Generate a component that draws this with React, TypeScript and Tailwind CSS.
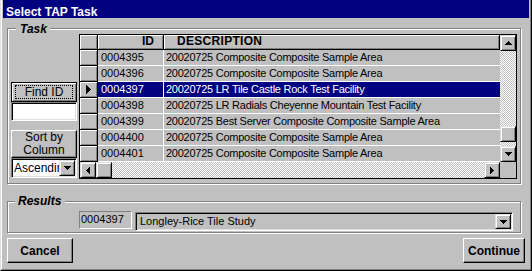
import React from "react";

type Dir = "up" | "down" | "left" | "right" | "sel";

function Glyph({ dir }: { dir: Dir }) {
  const rects: Record<Dir, [number, number, number, number][]> = {
    down: [[0, 0, 7, 1], [1, 1, 5, 1], [2, 2, 3, 1], [3, 3, 1, 1]],
    up: [[3, 0, 1, 1], [2, 1, 3, 1], [1, 2, 5, 1], [0, 3, 7, 1]],
    left: [[3, 0, 1, 7], [2, 1, 1, 5], [1, 2, 1, 3], [0, 3, 1, 1]],
    right: [[0, 0, 1, 7], [1, 1, 1, 5], [2, 2, 1, 3], [3, 3, 1, 1]],
    sel: [[0, 0, 1, 9], [1, 1, 1, 7], [2, 2, 1, 5], [3, 3, 1, 3], [4, 4, 1, 1]],
  };
  const w = dir === "up" || dir === "down" ? 7 : dir === "sel" ? 5 : 4;
  const h = dir === "up" || dir === "down" ? 4 : dir === "sel" ? 9 : 7;
  return (
    <svg width={w} height={h} viewBox={`0 0 ${w} ${h}`} shapeRendering="crispEdges" className="block">
      {rects[dir].map((r, i) => (
        <rect key={i} x={r[0]} y={r[1]} width={r[2]} height={r[3]} fill="#000" />
      ))}
    </svg>
  );
}

const scrollBtn =
  "w-[16px] h-[16px] shrink-0 bg-[#c0c0c0] border border-t-[#dfdfdf] border-l-[#dfdfdf] border-r-black border-b-black shadow-[inset_1px_1px_0_#ffffff,inset_-1px_-1px_0_#808080] flex items-center justify-center";

const pushBtn =
  "bg-[#c0c0c0] border border-t-white border-l-white border-r-black border-b-black shadow-[inset_-1px_-1px_0_#808080] flex items-center justify-center";

const sunken =
  "border border-t-[#808080] border-l-[#808080] border-r-white border-b-white shadow-[inset_1px_1px_0_#000000,inset_-1px_-1px_0_#dfdfdf]";

const checker =
  "bg-[image:repeating-conic-gradient(#c0c0c0_0_25%,#ffffff_0_50%)] bg-[length:2px_2px]";

const hdrCell =
  "bg-[#c0c0c0] border-r border-b border-r-black border-b-black shadow-[inset_1px_1px_0_#ffffff,inset_-1px_-1px_0_#808080]";

const rows = [
  ["0004395", "20020725 Composite Composite Sample Area"],
  ["0004396", "20020725 Composite Composite Sample Area"],
  ["0004397", "20020725 LR Tile Castle Rock Test Facility"],
  ["0004398", "20020725 LR Radials Cheyenne Mountain Test Facility"],
  ["0004399", "20020725 Best Server Composite Composite Sample Area"],
  ["0004400", "20020725 Composite Composite Sample Area"],
  ["0004401", "20020725 Composite Composite Sample Area"],
];

export default function App() {
  return (
    <div className="w-[532px] h-[271px] bg-[#c0c0c0] font-['Liberation_Sans',Arial,sans-serif] text-black border-l border-l-[#dfdfdf] border-r border-r-black border-b border-b-black overflow-hidden">
      <div className="h-full flex flex-col border-l border-l-white border-r border-r-[#808080] border-b border-b-[#808080] px-px pb-px">
        {/* Title bar */}
        <div className="h-[18px] shrink-0 bg-[#000080] text-white font-bold text-[12px] leading-[12px] pt-[6px] pl-[3px] whitespace-nowrap">
          Select TAP Task
        </div>

        {/* Task group */}
        <div className="relative mt-[10px] ml-[4px] w-[514px] h-[156px] border border-[#808080] shadow-[inset_1px_1px_0_#ffffff,1px_1px_0_#ffffff] flex pt-[5px] pl-[3px] pr-[3px] pb-[4px] gap-[2px]">
          <span className="absolute left-[8px] top-[-6px] bg-[#c0c0c0] pl-[4px] pr-[3px] font-bold italic text-[12px] leading-[12px]">
            Task
          </span>

          {/* left controls */}
          <div className="w-[66px] flex flex-col justify-end pb-[1px]">
            <div className="h-[20px] bg-[#c0c0c0] border border-black shadow-[inset_1px_1px_0_#ffffff,inset_-1px_-1px_0_#808080] flex items-stretch px-[3px] py-[2px]">
              <span className="flex-1 flex items-center justify-center border border-dotted border-black text-[12px] leading-[12px]">
                Find ID
              </span>
            </div>
            <div className={`h-[19px] bg-white ${sunken}`} />
            <div className={`h-[28px] mt-[9px] ${pushBtn} flex-col text-[12px] leading-[13px]`}>
              <span>Sort by</span>
              <span>Column</span>
            </div>
            <div className={`h-[20px] bg-white ${sunken} flex items-stretch p-px`}>
              <div className="flex-1 overflow-hidden whitespace-nowrap text-[12px] leading-[16px] pl-[1px]">Ascending</div>
              <div className={scrollBtn + " !h-[16px]"}>
                <Glyph dir="down" />
              </div>
            </div>
          </div>

          {/* grid */}
          <div className="w-[438px] h-[145px] border border-black flex flex-col">
            <div className="flex h-[127px]">
              <div className="w-[420px] flex flex-col">
                <div className="flex h-[15px] font-bold text-[12px] leading-[13px]">
                  <div className={`w-[18px] ${hdrCell}`} />
                  <div className={`w-[66px] ${hdrCell} text-right pr-[9px]`}>ID</div>
                  <div className={`flex-1 ${hdrCell} pl-[13px] tracking-[0.3px]`}>DESCRIPTION</div>
                </div>
                {rows.map((r, i) => {
                  const sel = i === 2;
                  return (
                    <div key={i} className="flex h-[16px] text-[11px] leading-[14px]">
                      <div className={`w-[18px] ${hdrCell} flex items-center pl-[6px]`}>
                        {sel && <Glyph dir="sel" />}
                      </div>
                      <div
                        className={`w-[66px] border-r border-b border-r-white border-b-white pl-[3px] whitespace-nowrap overflow-hidden ${
                          sel ? "bg-[#000080] text-white" : ""
                        }`}
                      >
                        {r[0]}
                      </div>
                      <div
                        className={`flex-1 border-b border-b-white pl-[2px] tracking-[-0.25px] whitespace-nowrap overflow-hidden ${
                          sel ? "bg-[#000080] text-white" : ""
                        }`}
                      >
                        {r[1]}
                      </div>
                    </div>
                  );
                })}
              </div>
              <div className="w-[16px] flex flex-col">
                <div className={scrollBtn}>
                  <Glyph dir="up" />
                </div>
                <div className={`flex-1 flex flex-col ${checker}`}>
                  <div className={`${scrollBtn} mt-auto mb-[4px]`} />
                </div>
                <div className={scrollBtn}>
                  <Glyph dir="down" />
                </div>
              </div>
            </div>
            <div className="flex h-[16px]">
              <div className={scrollBtn}>
                <Glyph dir="left" />
              </div>
              <div className={scrollBtn} />
              <div className={`flex-1 ${checker}`} />
              <div className={scrollBtn}>
                <Glyph dir="right" />
              </div>
              <div className="w-[16px] bg-[#c0c0c0]" />
            </div>
          </div>
        </div>

        {/* Results group */}
        <div className="relative mt-[17px] ml-[4px] w-[514px] h-[32px] border border-[#808080] shadow-[inset_1px_1px_0_#ffffff,1px_1px_0_#ffffff] flex items-start pt-[9px] pl-[71px] pr-[7px] gap-[3px]">
          <span className="absolute left-[7px] top-[-7px] bg-[#c0c0c0] pl-[3px] pr-[4px] font-bold italic text-[12px] leading-[12px]">
            Results
          </span>
          <div className="w-[53px] h-[18px] border border-t-[#808080] border-l-[#808080] border-r-white border-b-white text-[11px] leading-[15px] pl-[1px] whitespace-nowrap">
            0004397
          </div>
          <div className={`flex-1 h-[19px] mt-[1px] ${sunken} bg-[#c0c0c0] flex items-stretch p-px`}>
            <div className="flex-1 text-[11px] leading-[15px] pl-[3px] whitespace-nowrap">Longley-Rice Tile Study</div>
            <div className={scrollBtn + " !h-[15px]"}>
              <Glyph dir="down" />
            </div>
          </div>
        </div>

        {/* Buttons */}
        <div className="mt-[5px] flex justify-between pl-[4px] pr-[4px]">
          <div className={`w-[66px] h-[25px] ${pushBtn} font-bold text-[12px]`}>Cancel</div>
          <div className={`w-[62px] h-[25px] ${pushBtn} font-bold text-[12px]`}>Continue</div>
        </div>
      </div>
    </div>
  );
}
